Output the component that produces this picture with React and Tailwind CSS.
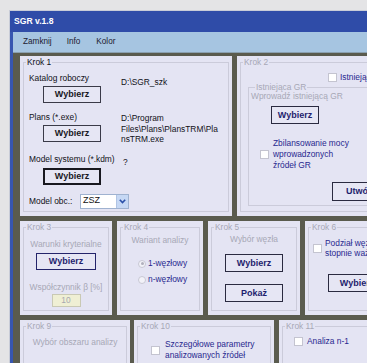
import React from 'react';

// small win-classic style widgets
function Btn({ className = '', children }) {
  return (
    <div className={`flex items-center justify-center bg-[#e6e6f4] font-bold text-[9px] leading-none shrink-0 ${className}`}>
      {children}
    </div>
  );
}

function Check({ className = '' }) {
  return <div className={`w-[9px] h-[9px] bg-white border border-[#c4c4d0] shrink-0 ${className}`} />;
}

function Radio({ on }) {
  return (
    <div className="w-[8px] h-[8px] rounded-full border border-[#c8c8d4] bg-[#f2f2f8] flex items-center justify-center shrink-0">
      {on && <div className="w-[3px] h-[3px] rounded-full bg-[#b0b0bc]" />}
    </div>
  );
}

function Panel({ title, active, className = '', children }) {
  return (
    <div className={`bg-[#e4e4f3] px-[3px] pt-[1px] pb-[4px] shrink-0 ${className}`}>
      <fieldset className="h-full min-w-0 border border-[#cbcbda]">
        <legend className={`ml-[2px] px-[1px] leading-[11px] ${active ? 'text-[#111118]' : 'text-[#a7a8b6]'}`}>{title}</legend>
        {children}
      </fieldset>
    </div>
  );
}

export default function App() {
  return (
    <div className="w-[367px] h-[363px] overflow-hidden bg-[#e4e4e6] font-['Liberation_Sans',Arial,sans-serif] text-[8.4px]">
      <div className="ml-[9px] mt-[10px] border-l border-t border-[#c8ccd8] w-[400px]">
        {/* title bar */}
        <div className="h-[21px] bg-[#2f4ca8] flex items-center pl-[4px] text-white font-bold text-[8.6px]">
          SGR v.1.8
        </div>

        <div className="bg-[#3756b0] pl-[3px]">
          {/* menu */}
          <div className="h-[21px] bg-[#a6c5e1] border-b border-[#8aa0b0] flex items-center pl-[10px] text-[#1c2030] text-[8.2px]">
            <span>Zamknij</span>
            <span className="ml-[15px]">Info</span>
            <span className="ml-[16px]">Kolor</span>
          </div>

          {/* client area */}
          <div className="bg-[#5a5b4e] pt-[3px] pl-[7px] h-[320px] flex flex-col gap-[5px]">
            {/* row 1 */}
            <div className="flex gap-[5px]">
              <Panel title="Krok 1" active className="w-[212px] h-[160px]">
                <div className="pl-[5px] text-[#111118]">
                  <div className="mt-[5px] flex">
                    <div className="w-[92px]">
                      <div className="leading-[11px]">Katalog roboczy</div>
                      <Btn className="mt-[2px] ml-[14px] w-[58px] h-[17px] border border-[#3a3a48] text-[#18181f]">Wybierz</Btn>
                    </div>
                    <div className="pt-[4px] leading-[11px]">{'D:\\SGR_szk'}</div>
                  </div>

                  <div className="mt-[9px] flex">
                    <div className="w-[92px]">
                      <div className="leading-[11px]">Plans (*.exe)</div>
                      <Btn className="mt-[2px] ml-[14px] w-[58px] h-[17px] border border-[#3a3a48] text-[#18181f]">Wybierz</Btn>
                    </div>
                    <div className="pt-[1px] leading-[10.5px]">
                      <div>{'D:\\Program'}</div>
                      <div>{'Files\\Plans\\PlansTRM\\Pla'}</div>
                      <div>nsTRM.exe</div>
                    </div>
                  </div>

                  <div className="mt-[9px] flex">
                    <div className="w-[92px]">
                      <div className="leading-[11px] whitespace-nowrap">Model systemu (*.kdm)</div>
                      <Btn className="mt-[3px] ml-[14px] w-[58px] h-[17px] border-2 border-[#18181f] text-[#18181f]">Wybierz</Btn>
                    </div>
                    <div className="pt-[3px] leading-[11px] pl-[2px]">?</div>
                  </div>

                  <div className="mt-[9px] flex items-center h-[15px]">
                    <div className="w-[51px]">Model obc.:</div>
                    <div className="w-[49px] h-[15px] bg-white border border-[#9fb2d0] flex items-center">
                      <span className="flex-1 pl-[2px] text-[9px] text-[#111]">ZSZ</span>
                      <div className="w-[12px] h-full bg-[#c6d8f4] border-l border-[#b0c4e4] flex items-center justify-center">
                        <svg width="7" height="5" viewBox="0 0 7 5">
                          <path d="M0.8 0.8 L3.5 3.6 L6.2 0.8" fill="none" stroke="#2a4fa8" strokeWidth="1.6" />
                        </svg>
                      </div>
                    </div>
                  </div>
                </div>
              </Panel>

              <Panel title="Krok 2" className="w-[220px] h-[160px]">
                <div className="pl-[5px]">
                  <div className="mt-[4px] h-[11px] flex items-center ml-[82px]">
                    <Check />
                    <span className="ml-[3px] text-[#28288f] whitespace-nowrap">Istniejąca GR</span>
                  </div>
                  <fieldset className="ml-[2px] h-[123px] border border-[#cbcbda]">
                    <legend className="ml-[6px] px-[1px] leading-[8px] text-[#a7a8b6]">Istniejąca GR</legend>
                    <div className="pl-[2px]">
                      <div className="mt-[1px] leading-[9px] text-[#a7a8b6]">Wprowadź istniejącą GR</div>
                      <Btn className="mt-[5px] ml-[20px] w-[48px] h-[18px] border-[1.5px] border-[#2a2a40] text-[#1e1e6e]">Wybierz</Btn>
                      <div className="mt-[14px] flex items-center">
                        <Check className="ml-[9px]" />
                        <div className="ml-[4px] leading-[11px] text-[#28288f]">
                          <div>Zbilansowanie mocy</div>
                          <div>wprowadzonych</div>
                          <div>źródeł GR</div>
                        </div>
                      </div>
                      <Btn className="mt-[11px] ml-[81px] w-[58px] h-[19px] border-[1.5px] border-[#2a2a40] text-[#1e1e6e]">Utwórz</Btn>
                    </div>
                  </fieldset>
                </div>
              </Panel>
            </div>

            {/* row 2 */}
            <div className="flex gap-[5px]">
              <Panel title="Krok 3" className="w-[92px] h-[94px]">
                <div className="flex flex-col items-center text-[#a7a8b6]">
                  <div className="mt-[6px] leading-[11px] whitespace-nowrap">Warunki kryterialne</div>
                  <Btn className="mt-[3px] w-[60px] h-[17px] border-[1.5px] border-[#24246a] text-[#1e1e6e]">Wybierz</Btn>
                  <div className="mt-[12px] leading-[11px] whitespace-nowrap">Współczynnik β  [%]</div>
                  <div className="mt-[1px] w-[29px] h-[13px] bg-[#efefd4] border border-[#c9c9b4] flex items-center justify-center text-[#a7a8b0]">10</div>
                </div>
              </Panel>

              <Panel title="Krok 4" className="w-[86px] h-[94px]">
                <div className="flex flex-col">
                  <div className="mt-[2px] leading-[11px] text-center text-[#a7a8b6]">Wariant analizy</div>
                  <div className="mt-[12px] ml-[17px] h-[11px] flex items-center">
                    <Radio on />
                    <span className="ml-[2px] text-[#28288f]">1-węzłowy</span>
                  </div>
                  <div className="mt-[5px] ml-[17px] h-[11px] flex items-center">
                    <Radio />
                    <span className="ml-[2px] text-[#28288f]">n-węzłowy</span>
                  </div>
                </div>
              </Panel>

              <Panel title="Krok 5" className="w-[92px] h-[94px]">
                <div className="flex flex-col items-center">
                  <div className="mt-[1px] leading-[11px] text-[#a7a8b6]">Wybór węzła</div>
                  <Btn className="mt-[9px] w-[58px] h-[18px] border-[1.5px] border-[#2a2a40] text-[#1e1e6e]">Wybierz</Btn>
                  <Btn className="mt-[12px] w-[58px] h-[18px] border-[1.5px] border-[#2a2a40] text-[#1e1e6e]">Pokaż</Btn>
                </div>
              </Panel>

              <Panel title="Krok 6" className="w-[110px] h-[94px]">
                <div className="pl-[4px]">
                  <div className="mt-[5px] flex items-center">
                    <Check />
                    <div className="ml-[3px] leading-[10px] text-[#28288f] whitespace-nowrap">
                      <div>Podział węzłów wg</div>
                      <div>stopnie ważności</div>
                    </div>
                  </div>
                  <Btn className="mt-[16px] ml-[15px] w-[58px] h-[18px] border-[1.5px] border-[#2a2a40] text-[#1e1e6e]">Wybierz</Btn>
                </div>
              </Panel>
            </div>

            {/* row 3 */}
            <div className="flex">
              <Panel title="Krok 9" className="w-[110px] h-[80px]">
                <div className="mt-[5px] leading-[11px] text-center text-[#a7a8b6] whitespace-nowrap">Wybór obszaru analizy</div>
              </Panel>

              <Panel title="Krok 10" className="ml-[4px] w-[140px] h-[80px]">
                <div className="mt-[7px] ml-[13px] flex items-center">
                  <Check />
                  <div className="ml-[5px] leading-[11px] text-[#28288f]">
                    <div>Szczegółowe parametry</div>
                    <div>analizowanych źródeł</div>
                  </div>
                </div>
              </Panel>

              <Panel title="Krok 11" className="ml-[5px] w-[110px] h-[80px]">
                <div className="mt-[4px] ml-[11px] h-[11px] flex items-center">
                  <Check />
                  <span className="ml-[4px] text-[#28288f]">Analiza n-1</span>
                </div>
              </Panel>
            </div>
          </div>
        </div>
      </div>
    </div>
  );
}
